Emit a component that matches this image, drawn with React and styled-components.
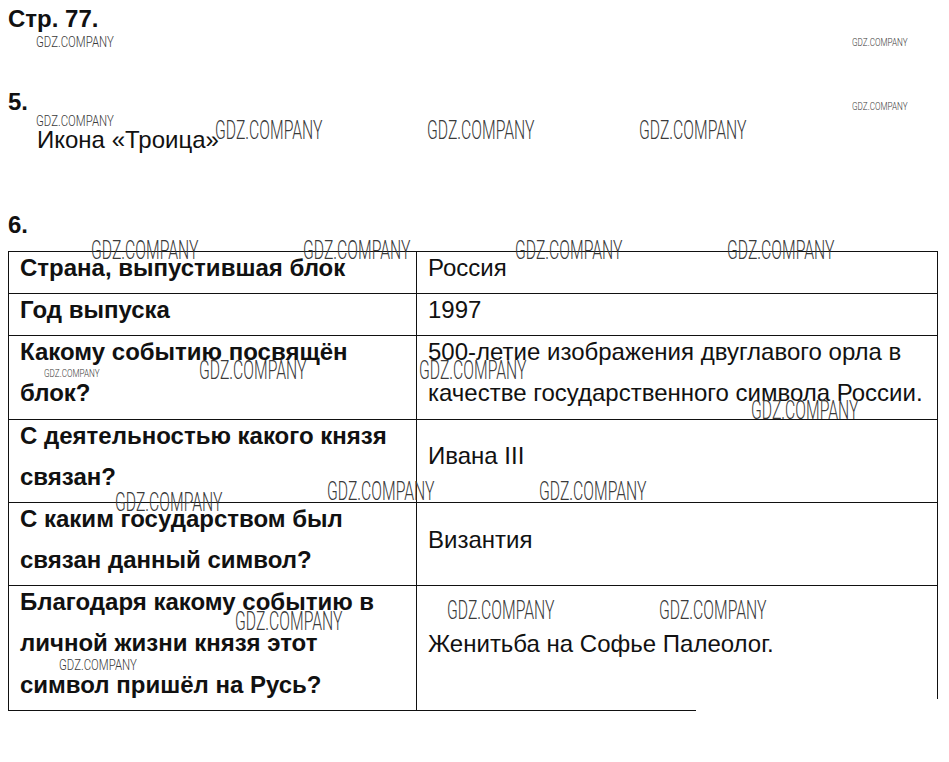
import React from 'react'
import styled, { createGlobalStyle } from 'styled-components'

const GlobalStyle = createGlobalStyle`
  html, body {
    margin: 0;
    background: #fff;
  }
  body {
    padding: 8px;
    font-family: "Liberation Sans", Arial, sans-serif;
    color: #111;
  }
`

const Page = styled.div`
  position: relative;
  width: 929px;
  font-size: 24px;
`

const Heading = styled.div`
  font-weight: bold;
  line-height: 22px;
  margin-top: ${p => p.gap || 0}px;
`

const Answer = styled.div`
  line-height: 22px;
  margin-top: ${p => p.gap || 0}px;
  padding-left: 29px;
`

const Table = styled.table`
  margin-top: ${p => p.gap || 0}px;
  width: 929px;
  border-collapse: collapse;
  table-layout: fixed;
`

const Cell = styled.td`
  border: 1px solid #111;
  padding: 0 4px 0 11px;
  line-height: 41.15px;
  vertical-align: ${p => (p.top ? 'top' : 'middle')};
  font-weight: ${p => (p.bold ? 'bold' : 'normal')};
  white-space: nowrap;
`

const LastValue = styled(Cell)`
  position: relative;
  border-bottom: none;
  border-right: none;

  &::after {
    content: '';
    position: absolute;
    left: 0;
    bottom: -1px;
    width: 279px;
    height: 1px;
    background: #111;
  }

  &::before {
    content: '';
    position: absolute;
    right: 0;
    top: -1px;
    bottom: 11px;
    width: 1px;
    background: #111;
  }
`

const Lift = styled.span`
  vertical-align: 5px;
  line-height: 20px;
`

const Mark = styled.span`
  position: absolute;
  left: ${p => p.x}px;
  top: ${p => p.y}px;
  font-family: Roboto, "DejaVu Sans", sans-serif;
  font-weight: 300;
  font-size: ${p => p.size}px;
  line-height: 1;
  color: #3a3a3a;
  white-space: nowrap;
  transform: scaleX(${p => p.squeeze});
  transform-origin: left top;
  pointer-events: none;
`

const SIZES = {
  big: { size: 25, squeeze: 0.63 },
  small: { size: 15, squeeze: 0.76 },
  tiny: { size: 11, squeeze: 0.74 },
}

// page-space coordinates (body padding is 8px)
const marks = [
  [28, 27, 'small'],
  [844, 29, 'tiny'],
  [844, 93, 'tiny'],
  [28, 106, 'small'],
  [207, 110, 'big'],
  [419, 110, 'big'],
  [631, 110, 'big'],
  [83, 230, 'big'],
  [295, 230, 'big'],
  [507, 230, 'big'],
  [719, 230, 'big'],
  [36, 360, 'tiny'],
  [191, 350, 'big'],
  [411, 350, 'big'],
  [743, 390, 'big'],
  [107, 482, 'big'],
  [319, 471, 'big'],
  [531, 471, 'big'],
  [439, 590, 'big'],
  [651, 590, 'big'],
  [227, 601, 'big'],
  [51, 650, 'small'],
]

const rows = [
  { label: ['Страна, выпустившая блок'], value: ['Россия'] },
  { label: ['Год выпуска'], value: ['1997'] },
  {
    label: ['Какому событию посвящён', 'блок?'],
    value: ['500-летие изображения двуглавого орла в', 'качестве государственного символа России.'],
    top: true,
  },
  { label: ['С деятельностью какого князя', 'связан?'], value: ['Ивана III'] },
  { label: ['С каким государством был', 'связан данный символ?'], value: ['Византия'] },
  {
    label: ['Благодаря какому событию в', 'личной жизни князя этот', 'символ пришёл на Русь?'],
    value: ['Женитьба на Софье Палеолог.'],
    last: true,
  },
]

const Lines = ({ lines }) =>
  lines.map((line, i) => (
    <React.Fragment key={i}>
      {i > 0 && <br />}
      <Lift>{line}</Lift>
    </React.Fragment>
  ))

export default function App() {
  return (
    <>
      <GlobalStyle />
      <Page>
        <Heading>Стр. 77.</Heading>
        <Heading gap={61}>5.</Heading>
        <Answer gap={16}>Икона «Троица»</Answer>
        <Heading gap={63}>6.</Heading>
        <Table gap={15}>
          <colgroup>
            <col style={{ width: 408 }} />
            <col style={{ width: 521 }} />
          </colgroup>
          <tbody>
            {rows.map((r, i) => {
              const Value = r.last ? LastValue : Cell
              return (
                <tr key={i}>
                  <Cell bold>
                    <Lines lines={r.label} />
                  </Cell>
                  <Value top={r.top}>
                    <Lines lines={r.value} />
                  </Value>
                </tr>
              )
            })}
          </tbody>
        </Table>
        {marks.map(([x, y, kind], i) => (
          <Mark key={i} x={x} y={y} {...SIZES[kind]}>
            GDZ.COMPANY
          </Mark>
        ))}
      </Page>
    </>
  )
}
